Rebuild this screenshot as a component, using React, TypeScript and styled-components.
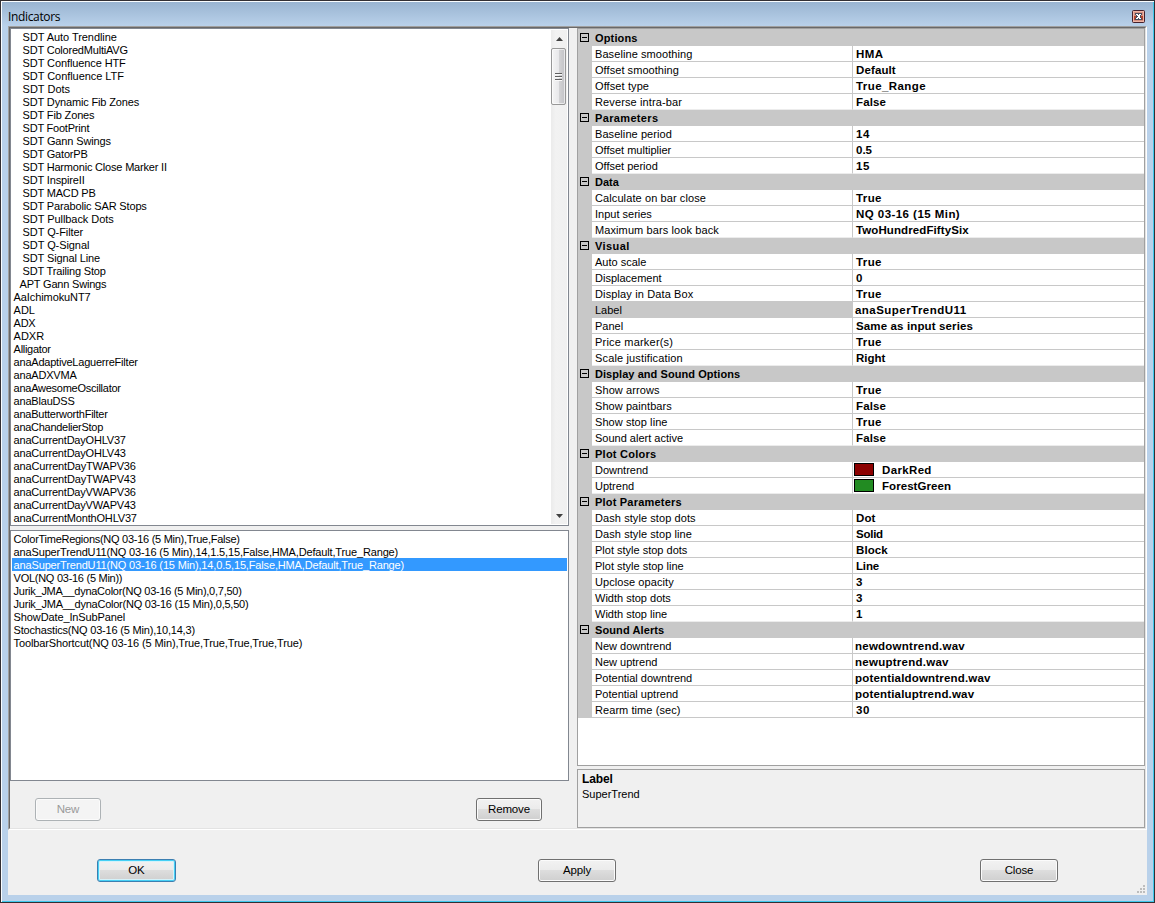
import React from "react";
import styled, { createGlobalStyle, css } from "styled-components";

const Global = createGlobalStyle`
  * { box-sizing: border-box; }
  html, body { margin: 0; padding: 0; overflow: hidden; }
  body { font: 11px/13px "Liberation Sans", Arial, sans-serif; color: #000; }
`;

const Dialog = styled.div`
  width: 1155px;
  height: 903px;
  display: flex;
  flex-direction: column;
  background: linear-gradient(#98b3d0, #b9d1ea 25px);
  border: 1px solid #322f33;
  box-shadow: inset 1px 1px #fafdff, inset -1px -1px #3fc8ec;
  padding: 1px 7px 7px;
`;

const TitleBar = styled.header`
  height: 24px;
  display: flex;
  justify-content: space-between;
  flex: none;
`;

const Title = styled.h1`
  margin: 0;
  padding-top: 7px;
  font: 12px/16px "Open Sans", "Noto Sans", sans-serif;
  letter-spacing: -0.35px;
`;

const CloseBox = styled.button`
  width: 13px;
  height: 13px;
  margin: 8px 2px 0 0;
  padding: 0;
  border: 0;
  background: none;
  svg { display: block; }
`;

const Client = styled.main`
  flex: 1;
  min-height: 0;
  display: flex;
  flex-direction: column;
  background: #f0f0f0;
`;

const Workspace = styled.div`
  height: 804px;
  display: flex;
  flex: none;
  border: 1px solid #a0a0a0;
  border-right-color: #fff;
  border-bottom-color: #fff;
`;

const Inner = styled.div`
  flex: 1;
  display: flex;
  border: 1px solid #696969;
  border-right-color: #e3e3e3;
  border-bottom-color: #e3e3e3;
`;

const LeftColumn = styled.section`
  width: 559px;
  margin-right: 8px;
  display: flex;
  flex-direction: column;
`;

const ListBox = styled.div<{ $height: number }>`
  height: ${(p) => p.$height}px;
  flex: none;
  display: flex;
  background: #fff;
  border: 1px solid #828790;
  padding: 1px;
  & + & { margin-top: 4px; }
`;

const Items = styled.ul`
  flex: 1;
  margin: 0;
  padding: 0;
  list-style: none;
`;

const Item = styled.li<{ $indent?: number; $selected?: boolean; $ls?: number }>`
  height: 13px;
  line-height: 15px;
  padding-left: ${(p) => 1.6 + (p.$indent ?? 0)}px;
  white-space: pre;
  letter-spacing: ${(p) => p.$ls ?? 0}px;
  ${(p) => p.$selected && css`background: #3399ff; color: #fff;`}
`;

const ScrollTrack = styled.div`
  width: 16px;
  display: flex;
  flex-direction: column;
  background: linear-gradient(90deg, #ebebeb, #f2f2f2 30%, #f0f0f0);
`;

const ScrollArrow = styled.div<{ $down?: boolean }>`
  height: 18px;
  display: flex;
  align-items: center;
  justify-content: center;
  padding-top: ${(p) => (p.$down ? 2 : 0)}px;
`;

const Thumb = styled.div`
  height: 57px;
  width: 15px;
  border: 1px solid #979797;
  border-radius: 2px;
  display: flex;
  align-items: center;
  justify-content: center;
  background: linear-gradient(90deg, #f5f5f5, #e9e9eb 50%, #d3d3d5 55%, #c2c2c6);
  box-shadow: inset 0 0 0 1px rgba(255, 255, 255, 0.6);
`;

const Spacer = styled.div`
  flex: 1;
`;

const ListButtons = styled.div`
  display: flex;
  justify-content: space-between;
  padding: 17px 27px 0 25px;
`;

const PushButton = styled.button<{ $width: number; $focus?: boolean }>`
  width: ${(p) => p.$width}px;
  height: 23px;
  padding: 0 0 1px;
  font: inherit;
  font-size: 11.5px;
  letter-spacing: -0.15px;
  color: #000;
  border: 1px solid #707070;
  border-radius: 3px;
  background: linear-gradient(#f2f2f2, #ebebeb 48%, #dddddd 50%, #cfcfcf);
  box-shadow: inset 0 0 0 1px #fbfbfb;
  ${(p) => p.$focus && css`
    border-color: #3c7fb1;
    box-shadow: inset 0 0 0 1px #46d0f5, inset 0 0 0 2px #d5f2fa;
  `}
  &:disabled {
    color: #9a9a9a;
    border-color: #adb2b5;
    background: #f4f4f4;
  }
`;

const RightColumn = styled.section`
  flex: 1;
  display: flex;
  flex-direction: column;
  gap: 3px;
`;

const Grid = styled.div`
  height: 738px;
  flex: none;
  border: 1px solid #a0a0a0;
  background: #fff;
`;

const Category = styled.div`
  height: 16px;
  display: flex;
  align-items: flex-start;
  padding: 3px 0 0 2px;
  background: #c8c8c8;
  font-weight: bold;
  line-height: 11px;
  &:first-child { height: 17px; padding-top: 4px; }
  svg { display: block; margin-right: 6px; flex: none; }
`;

const PropRow = styled.div`
  height: 16px;
  display: flex;
  padding-left: 14px;
  background: #c8c8c8;
`;

const Cell = styled.div<{ $last?: boolean; $selected?: boolean }>`
  display: flex;
  align-items: center;
  padding-top: 2px;
  white-space: pre;
  background: ${(p) => (p.$selected ? "#c8c8c8" : "#fff")};
  border-bottom: 1px solid ${(p) => (p.$last ? "#ececec" : "#c8c8c8")};
`;

const NameCell = styled(Cell)`
  width: 261px;
  padding-left: 3px;
  border-right: 1px solid #c8c8c8;
`;

const ValueCell = styled(Cell)<{ $swatch?: boolean; $edit?: boolean }>`
  flex: 1;
  padding-left: ${(p) => (p.$swatch ? 1 : p.$edit ? 2 : 3)}px;
  font-weight: bold;
  font-size: 11.5px;
`;

const Swatch = styled.span<{ $color: string }>`
  width: 20px;
  height: 13px;
  margin: -1px 8px 1px 0;
  border: 1px solid #000;
  background: ${(p) => p.$color};
`;

const Text = styled.span<{ $ls?: number }>`
  letter-spacing: ${(p) => p.$ls ?? 0}px;
`;

const Help = styled.div`
  height: 59px;
  border: 1px solid #a0a0a0;
  padding: 2px 4px;
`;

const HelpTitle = styled.div`
  height: 15px;
  line-height: 15px;
  font-weight: bold;
  font-size: 12px;
  letter-spacing: -0.1px;
`;

const HelpText = styled.div`
  line-height: 15px;
`;

const Footer = styled.footer`
  flex: 1;
  display: flex;
  align-items: flex-start;
  padding: 29px 0 0 89px;
`;

const FooterSlot = styled.div<{ $width: number }>`
  width: ${(p) => p.$width}px;
`;

const Grip = styled.svg`
  align-self: flex-end;
  margin: 0 1px 1px auto;
`;

type Entry = [text: string, ls?: number, indent?: number];

const available: Entry[] = [
  ["SDT Auto Trendline", -0.05, 9],
  ["SDT ColoredMultiAVG", -0.2, 9],
  ["SDT Confluence HTF", -0.1, 9],
  ["SDT Confluence LTF", -0.06, 9],
  ["SDT Dots", 0, 9],
  ["SDT Dynamic Fib Zones", -0.15, 9],
  ["SDT Fib Zones", -0.15, 9],
  ["SDT FootPrint", -0.22, 9],
  ["SDT Gann Swings", -0.13, 9],
  ["SDT GatorPB", -0.18, 9],
  ["SDT Harmonic Close Marker II", -0.19, 9],
  ["SDT InspireII", -0.15, 9],
  ["SDT MACD PB", -0.18, 9],
  ["SDT Parabolic SAR Stops", -0.15, 9],
  ["SDT Pullback Dots", -0.06, 9],
  ["SDT Q-Filter", -0.08, 9],
  ["SDT Q-Signal", -0.08, 9],
  ["SDT Signal Line", -0.13, 9],
  ["SDT Trailing Stop", -0.17, 9],
  ["APT Gann Swings", -0.2, 6],
  ["AaIchimokuNT7", -0.1],
  ["ADL"],
  ["ADX", -0.3],
  ["ADXR"],
  ["Alligator", -0.3],
  ["anaAdaptiveLaguerreFilter", -0.22],
  ["anaADXVMA", -0.2],
  ["anaAwesomeOscillator", -0.26],
  ["anaBlauDSS", -0.2],
  ["anaButterworthFilter", -0.25],
  ["anaChandelierStop", -0.28],
  ["anaCurrentDayOHLV37", -0.2],
  ["anaCurrentDayOHLV43", -0.2],
  ["anaCurrentDayTWAPV36", -0.17],
  ["anaCurrentDayTWAPV43", -0.17],
  ["anaCurrentDayVWAPV36", -0.2],
  ["anaCurrentDayVWAPV43", -0.2],
  ["anaCurrentMonthOHLV37", -0.18],
];

const applied: Entry[] = [
  ["ColorTimeRegions(NQ 03-16 (5 Min),True,False)", -0.27],
  ["anaSuperTrendU11(NQ 03-16 (5 Min),14,1.5,15,False,HMA,Default,True_Range)", -0.155],
  ["anaSuperTrendU11(NQ 03-16 (15 Min),14,0.5,15,False,HMA,Default,True_Range)", -0.155],
  ["VOL(NQ 03-16 (5 Min))", -0.27],
  ["Jurik_JMA__dynaColor(NQ 03-16 (5 Min),0,7,50)", -0.26],
  ["Jurik_JMA__dynaColor(NQ 03-16 (15 Min),0,5,50)", -0.24],
  ["ShowDate_InSubPanel", -0.12],
  ["Stochastics(NQ 03-16 (5 Min),10,14,3)", -0.19],
  ["ToolbarShortcut(NQ 03-16 (5 Min),True,True,True,True,True)", -0.12],
];

interface Prop {
  name: string;
  value: string;
  ls?: number;
  vls?: number;
  color?: string;
  selected?: boolean;
  edit?: boolean;
}

const groups: { title: string; ls?: number; props: Prop[] }[] = [
  { title: "Options", ls: 0.15, props: [
    { name: "Baseline smoothing", ls: 0.08, value: "HMA", vls: 0.4 },
    { name: "Offset smoothing", ls: 0.06, value: "Default", vls: 0.12 },
    { name: "Offset type", ls: 0.1, value: "True_Range", vls: 0.42 },
    { name: "Reverse intra-bar", ls: 0.12, value: "False", vls: 0.12 },
  ] },
  { title: "Parameters", ls: 0.35, props: [
    { name: "Baseline period", ls: 0.07, value: "14", vls: 0.5 },
    { name: "Offset multiplier", value: "0.5" },
    { name: "Offset period", value: "15", vls: 0.5 },
  ] },
  { title: "Data", props: [
    { name: "Calculate on bar close", ls: 0.1, value: "True", vls: 0.4 },
    { name: "Input series", value: "NQ 03-16 (15 Min)", vls: 0.45 },
    { name: "Maximum bars look back", ls: 0.1, value: "TwoHundredFiftySix", vls: 0.1 },
  ] },
  { title: "Visual", ls: 0.4, props: [
    { name: "Auto scale", value: "True", vls: 0.4 },
    { name: "Displacement", value: "0" },
    { name: "Display in Data Box", ls: 0.13, value: "True", vls: 0.4 },
    { name: "Label", value: "anaSuperTrendU11", vls: 0.46, selected: true, edit: true },
    { name: "Panel", value: "Same as input series", vls: 0.13 },
    { name: "Price marker(s)", ls: 0.2, value: "True", vls: 0.4 },
    { name: "Scale justification", ls: 0.15, value: "Right", vls: 0 },
  ] },
  { title: "Display and Sound Options", ls: 0.06, props: [
    { name: "Show arrows", ls: 0.1, value: "True", vls: 0.4 },
    { name: "Show paintbars", ls: 0.07, value: "False", vls: 0.12 },
    { name: "Show stop line", ls: 0.07, value: "True", vls: 0.4 },
    { name: "Sound alert active", value: "False", vls: 0.12 },
  ] },
  { title: "Plot Colors", ls: 0.25, props: [
    { name: "Downtrend", value: "DarkRed", vls: 0.35, color: "#8b0000" },
    { name: "Uptrend", value: "ForestGreen", vls: 0.06, color: "#228b22" },
  ] },
  { title: "Plot Parameters", ls: 0.2, props: [
    { name: "Dash style stop dots", ls: 0.08, value: "Dot", vls: 0.1 },
    { name: "Dash style stop line", ls: 0.08, value: "Solid", vls: -0.25 },
    { name: "Plot style stop dots", value: "Block", vls: 0.1 },
    { name: "Plot style stop line", value: "Line", vls: -0.15 },
    { name: "Upclose opacity", ls: 0.07, value: "3" },
    { name: "Width stop dots", value: "3" },
    { name: "Width stop line", value: "1" },
  ] },
  { title: "Sound Alerts", ls: 0.1, props: [
    { name: "New downtrend", value: "newdowntrend.wav", vls: 0.24, edit: true },
    { name: "New uptrend", value: "newuptrend.wav", vls: 0.26, edit: true },
    { name: "Potential downtrend", value: "potentialdowntrend.wav", vls: 0.18, edit: true },
    { name: "Potential uptrend", value: "potentialuptrend.wav", vls: 0.18, edit: true },
    { name: "Rearm time (sec)", ls: 0.07, value: "30", vls: 0.5 },
  ] },
];

const Collapse = () => (
  <svg width="9" height="9" viewBox="0 0 9 9" shapeRendering="crispEdges">
    <rect x="0.5" y="0.5" width="8" height="8" fill="none" stroke="#000" />
    <path d="M2 4.5h5" stroke="#000" />
  </svg>
);

export default function App() {
  return (
    <>
      <Global />
      <Dialog>
        <TitleBar>
          <Title>Indicators</Title>
          <CloseBox aria-label="Close window">
            <svg width="13" height="13" viewBox="0 0 13 13">
              <rect x="0.5" y="0.5" width="12" height="12" rx="1" fill="#d58f80" stroke="#43202c" />
              <rect x="1.5" y="1.5" width="10" height="10" fill="none" stroke="#eeb5a6" />
              <path d="M2 6h9v4H2z" fill="#b5432c" />
              <g shapeRendering="crispEdges">
                <path d="M3 3h7v2H9v3h1v2H3V8h1V5H3z" fill="#4a4d5e" />
                <path d="M4 4h2v1h1V4h2v1H8v1H7.500v1H8v1h1v1H7V8H6v1H4V8h1V7h.5V6H5V5H4z" fill="#fff" />
              </g>
            </svg>
          </CloseBox>
        </TitleBar>
        <Client>
          <Workspace>
            <Inner>
              <LeftColumn>
                <ListBox $height={498}>
                  <Items>
                    {available.map(([t, ls, ind]) => (
                      <Item key={t} $ls={ls} $indent={ind}>{t}</Item>
                    ))}
                  </Items>
                  <ScrollTrack>
                    <ScrollArrow>
                      <svg width="7" height="4" viewBox="0 0 7 4"><path d="M0 4l3.5-4L7 4z" fill="#404040" /></svg>
                    </ScrollArrow>
                    <Thumb>
                      <svg width="7" height="8" viewBox="0 0 7 8" shapeRendering="crispEdges">
                        <path d="M0 .5h7M0 3.5h7M0 6.5h7" stroke="#606060" />
                        <path d="M0 1.5h7M0 4.5h7M0 7.5h7" stroke="#fafafa" />
                      </svg>
                    </Thumb>
                    <Spacer />
                    <ScrollArrow $down>
                      <svg width="7" height="4" viewBox="0 0 7 4"><path d="M0 0l3.5 4L7 0z" fill="#404040" /></svg>
                    </ScrollArrow>
                  </ScrollTrack>
                </ListBox>
                <ListBox $height={251}>
                  <Items>
                    {applied.map(([t, ls], i) => (
                      <Item key={t} $ls={ls} $selected={i === 2}>{t}</Item>
                    ))}
                  </Items>
                </ListBox>
                <ListButtons>
                  <PushButton $width={66} disabled>New</PushButton>
                  <PushButton $width={66}>Remove</PushButton>
                </ListButtons>
              </LeftColumn>
              <RightColumn>
                <Grid>
                  {groups.map((g) => (
                    <React.Fragment key={g.title}>
                      <Category>
                        <Collapse />
                        <Text $ls={g.ls}>{g.title}</Text>
                      </Category>
                      {g.props.map((p, i) => {
                        const last = i === g.props.length - 1 && g.title !== "Sound Alerts";
                        return (
                          <PropRow key={p.name}>
                            <NameCell $last={last} $selected={p.selected}><Text $ls={p.ls}>{p.name}</Text></NameCell>
                            <ValueCell $last={last} $swatch={!!p.color} $edit={p.edit}>
                              {p.color && <Swatch $color={p.color} />}
                              <Text $ls={p.vls}>{p.value}</Text>
                            </ValueCell>
                          </PropRow>
                        );
                      })}
                    </React.Fragment>
                  ))}
                </Grid>
                <Help>
                  <HelpTitle>Label</HelpTitle>
                  <HelpText>SuperTrend</HelpText>
                </Help>
              </RightColumn>
            </Inner>
          </Workspace>
          <Footer>
            <FooterSlot $width={441}><PushButton $width={79} $focus>OK</PushButton></FooterSlot>
            <FooterSlot $width={442}><PushButton $width={78}>Apply</PushButton></FooterSlot>
            <PushButton $width={78}>Close</PushButton>
            <Grip width="9" height="9" viewBox="0 0 9 9" shapeRendering="crispEdges">
              <path d="M6 0h2v2h-2zM3 3h2v2h-2zM6 3h2v2h-2zM0 6h2v2h-2zM3 6h2v2h-2zM6 6h2v2h-2z" fill="#bdbdbd" />
            </Grip>
          </Footer>
        </Client>
      </Dialog>
    </>
  );
}
